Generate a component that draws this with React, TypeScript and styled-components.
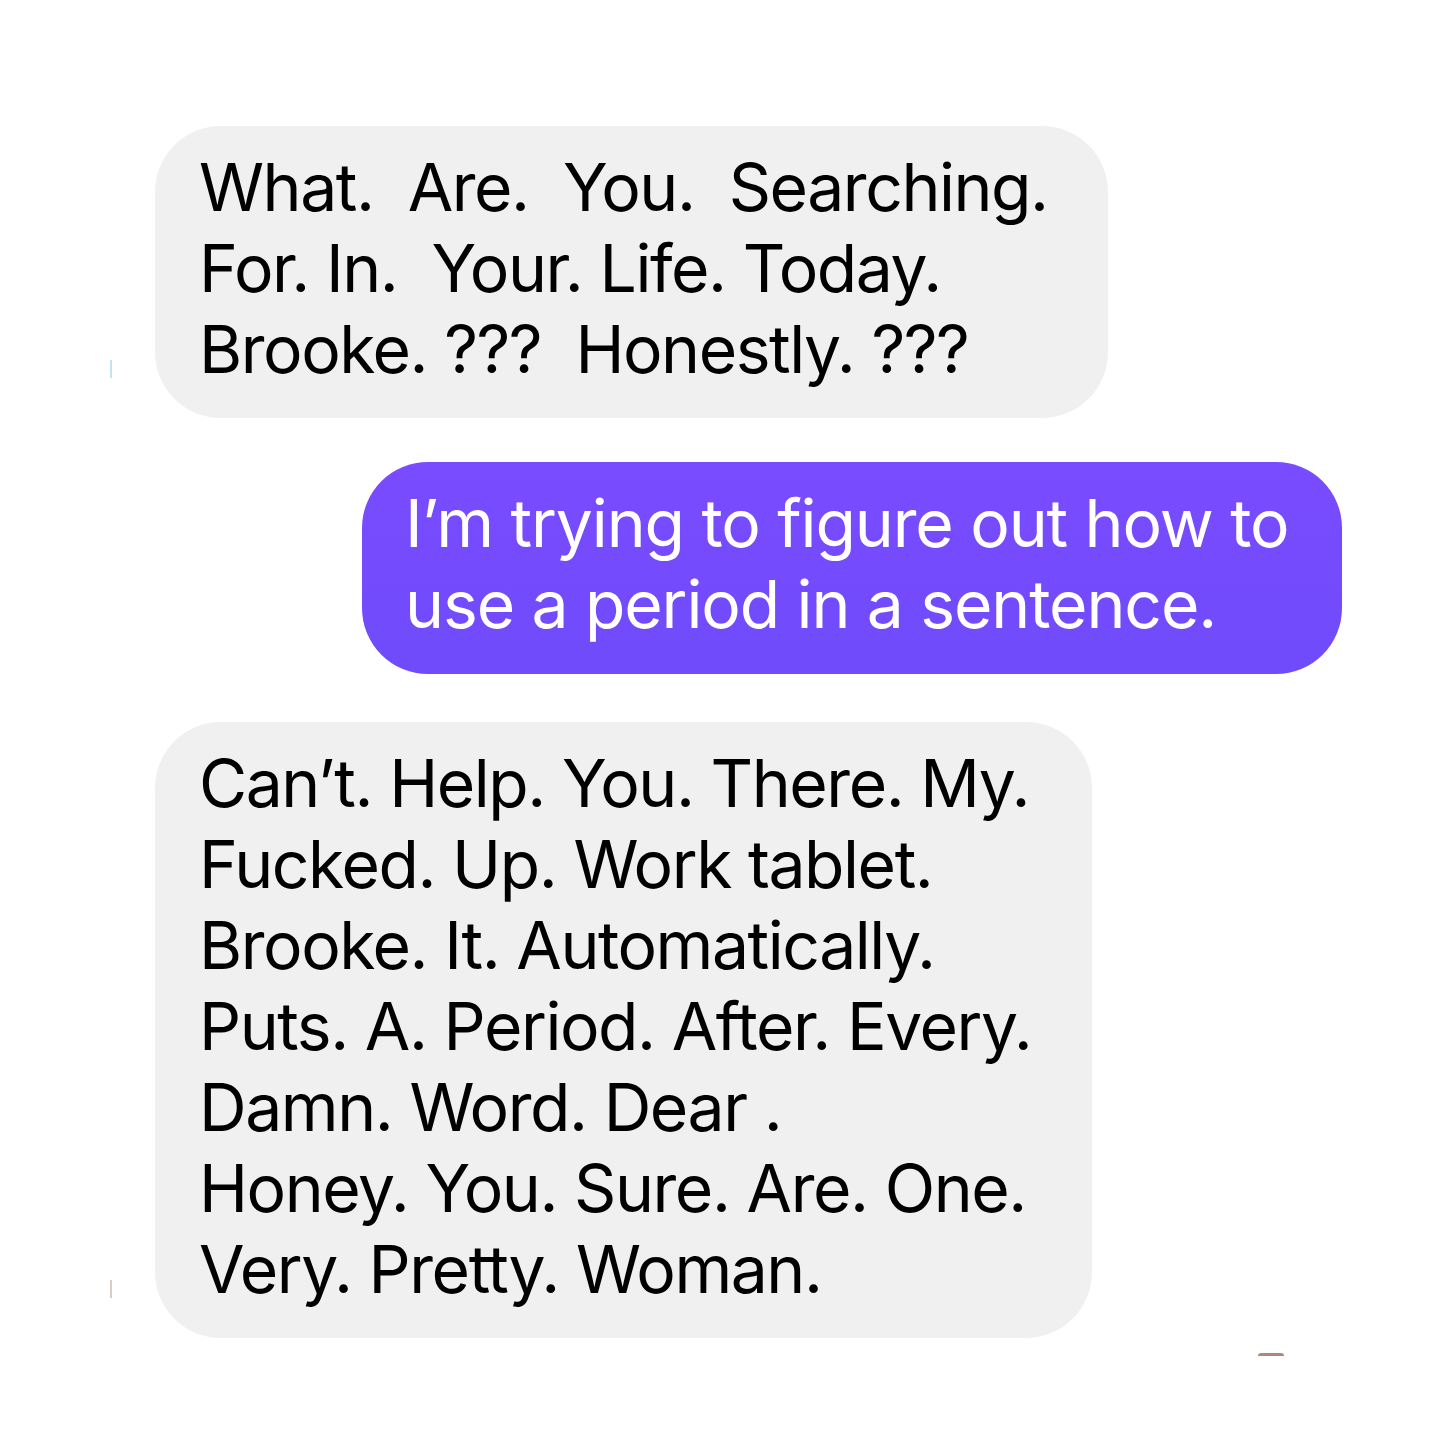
import React from "react";
import styled, { createGlobalStyle } from "styled-components";

const Global = createGlobalStyle`
  html, body { margin: 0; padding: 0; background: #ffffff; }
  body { font-family: Inter, "Noto Sans", "Liberation Sans", sans-serif; }
`;

const Page = styled.div`
  width: 1456px;
  height: 1456px;
  box-sizing: border-box;
  padding-top: 126px;
  display: flex;
  flex-direction: column;
  position: relative;
  background: #fff;
`;

const Row = styled.div<{ $mine?: boolean; $gap: number }>`
  display: flex;
  justify-content: ${(p) => (p.$mine ? "flex-end" : "flex-start")};
  padding: ${(p) => (p.$mine ? "0 114px 0 0" : "0 0 0 155px")};
  margin-bottom: ${(p) => p.$gap}px;
`;

const Bubble = styled.div<{ $mine?: boolean; $w: number }>`
  width: ${(p) => p.$w}px;
  box-sizing: border-box;
  padding: ${(p) => (p.$mine ? "21px 40px 29px 43px" : "21px 40px 28px 44px")};
  border-radius: 66px;
  background: ${(p) =>
    p.$mine ? "linear-gradient(180deg, #7a4bff 0%, #6f4bfb 100%)" : "#f0f0f0"};
  color: ${(p) => (p.$mine ? "#ffffff" : "#000000")};
  font-family: Inter, "Noto Sans", "Liberation Sans", sans-serif;
  font-size: 66px;
  line-height: 81px;
  letter-spacing: ${(p) => (p.$mine ? "-1.1px" : "-1.45px")};
`;

const Line = styled.div`
  white-space: pre;
`;

const Sliver = styled.div<{ $color: string }>`
  position: absolute;
  width: 2px;
  height: 18px;
  background: ${(p) => p.$color};
`;

const Crumb = styled.div`
  position: absolute;
  left: 1258px;
  top: 1353px;
  width: 26px;
  height: 3px;
  border-radius: 13px 13px 0 0;
  background: #b08878;
`;

export default function App() {
  return (
    <>
      <Global />
      <Page>
        <Row $gap={44}>
          <Bubble $w={953}>
            <Line>{"What.  Are.  You.  Searching."}</Line>
            <Line>{"For. In.  Your. Life. Today."}</Line>
            <Line>{"Brooke. ???  Honestly. ???"}</Line>
          </Bubble>
        </Row>
        <Row $mine $gap={48}>
          <Bubble $mine $w={980}>
            <Line>{"I\u2019m trying to figure out how to"}</Line>
            <Line>{"use a period in a sentence."}</Line>
          </Bubble>
        </Row>
        <Row $gap={0}>
          <Bubble $w={937}>
            <Line>{"Can\u2019t. Help. You. There. My."}</Line>
            <Line>{"Fucked. Up. Work tablet."}</Line>
            <Line>{"Brooke. It. Automatically."}</Line>
            <Line>{"Puts. A. Period. After. Every."}</Line>
            <Line>{"Damn. Word. Dear ."}</Line>
            <Line>{"Honey. You. Sure. Are. One."}</Line>
            <Line>{"Very. Pretty. Woman."}</Line>
          </Bubble>
        </Row>
        <Sliver $color="#bfe6f0" style={{ left: 110, top: 360 }} />
        <Sliver $color="#d8cfc4" style={{ left: 110, top: 1280 }} />
        <Crumb />
      </Page>
    </>
  );
}
